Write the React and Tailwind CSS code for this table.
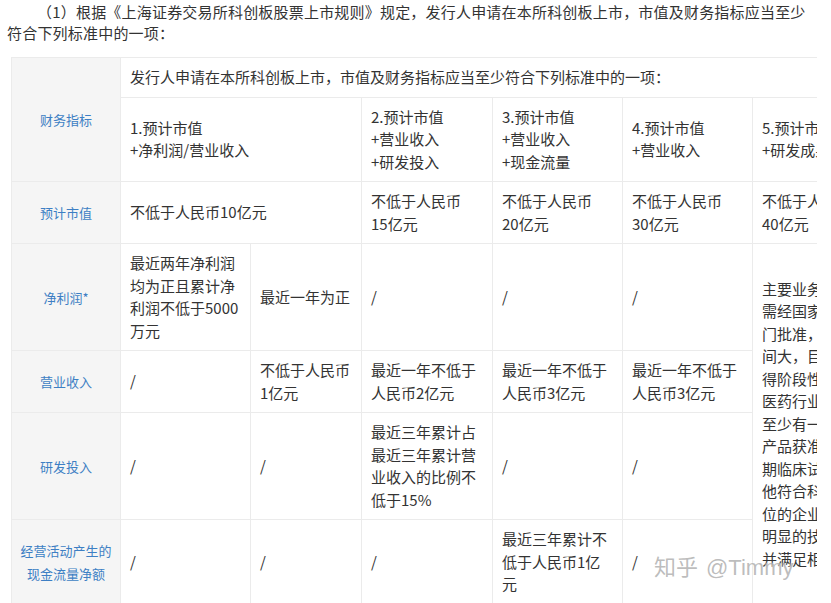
import React from 'react';

const cell = 'border border-[#ebebeb] px-[9px] py-2 align-middle text-left';
const label = 'border border-[#ebebeb] bg-[#f5f5f5] px-1 align-middle text-center text-[13px] leading-[23px] text-[#3d7fc4]';

const lines = (text) =>
  text.split('\n').map((t, i) => (
    <React.Fragment key={i}>
      {i > 0 && <br />}
      {t}
    </React.Fragment>
  ));

// 市值：数字和“亿元”不拆开
const cap = (n) => (
  <>
    不低于人民币<span className="whitespace-nowrap">{n}亿元</span>
  </>
);

function App() {
  return (
    <div className="relative min-h-[603px] bg-white font-['Noto_Sans_CJK_SC',sans-serif] text-[#333]">
      <p className="ml-[7px] w-[805px] pt-px indent-[30px] text-[15px] leading-[21px] tracking-[0.2px]">
        （1）根据《上海证券交易所科创板股票上市规则》规定，发行人申请在本所科创板上市，市值及财务指标应当至少符合下列标准中的一项：
      </p>

      <div className="ml-[11px] mt-[14px] w-[806px] overflow-hidden">
        <table className="w-[871px] table-fixed border-collapse text-[15px] leading-[22.5px]">
          <colgroup>
            <col className="w-[109px]" />
            <col className="w-[130px]" />
            <col className="w-[111px]" />
            <col className="w-[131px]" />
            <col className="w-[130px]" />
            <col className="w-[130px]" />
            <col className="w-[130px]" />
          </colgroup>
          <tbody>
            <tr>
              <td rowSpan={2} className={label}>财务指标</td>
              <td colSpan={6} className={cell}>
                发行人申请在本所科创板上市，市值及财务指标应当至少符合下列标准中的一项：
              </td>
            </tr>
            <tr>
              <td colSpan={2} className={cell}>{lines('1.预计市值\n+净利润/营业收入')}</td>
              <td className={cell}>{lines('2.预计市值\n+营业收入\n+研发投入')}</td>
              <td className={cell}>{lines('3.预计市值\n+营业收入\n+现金流量')}</td>
              <td className={cell}>{lines('4.预计市值\n+营业收入')}</td>
              <td className={cell}>{lines('5.预计市值\n+研发成果')}</td>
            </tr>
            <tr>
              <td className={label}>预计市值</td>
              <td colSpan={2} className={cell}>不低于人民币10亿元</td>
              <td className={cell}>{cap(15)}</td>
              <td className={cell}>{cap(20)}</td>
              <td className={cell}>{cap(30)}</td>
              <td className={cell}>{cap(40)}</td>
            </tr>
            <tr>
              <td className={label}>净利润*</td>
              <td className={cell}>最近两年净利润均为正且累计净利润不低于5000万元</td>
              <td className={cell}>最近一年为正</td>
              <td className={cell}>/</td>
              <td className={cell}>/</td>
              <td className={cell}>/</td>
              <td rowSpan={4} className={cell}>
                主要业务或产品需经国家有关部门批准，市场空间大，目前已取得阶段性成果。医药行业企业需至少有一项核心产品获准开展二期临床试验，其他符合科创板定位的企业需具备明显的技术优势并满足相应条件
              </td>
            </tr>
            <tr>
              <td className={label}>营业收入</td>
              <td className={cell}>/</td>
              <td className={cell}>不低于人民币1亿元</td>
              <td className={cell}>最近一年不低于人民币2亿元</td>
              <td className={cell}>最近一年不低于人民币3亿元</td>
              <td className={cell}>最近一年不低于人民币3亿元</td>
            </tr>
            <tr>
              <td className={label}>研发投入</td>
              <td className={cell}>/</td>
              <td className={cell}>/</td>
              <td className={cell}>最近三年累计占最近三年累计营业收入的比例不低于15%</td>
              <td className={cell}>/</td>
              <td className={cell}>/</td>
            </tr>
            <tr>
              <td className={label}>{lines('经营活动产生的\n现金流量净额')}</td>
              <td className={cell}>/</td>
              <td className={cell}>/</td>
              <td className={cell}>/</td>
              <td className={cell}>最近三年累计不低于人民币1亿元</td>
              <td className={cell}>/</td>
            </tr>
          </tbody>
        </table>
      </div>

      <div className="pointer-events-none absolute left-[654px] top-[550px] whitespace-nowrap text-[22px] leading-[30px] text-[#a0a0a0]/70 [text-shadow:0_0_2px_#fff]">
        <span className="font-['Noto_Sans_CJK_SC',sans-serif]">知乎</span>
        <span className="ml-[8px] font-['Liberation_Sans',sans-serif]">@Timmy</span>
      </div>
    </div>
  );
}

export default App;
